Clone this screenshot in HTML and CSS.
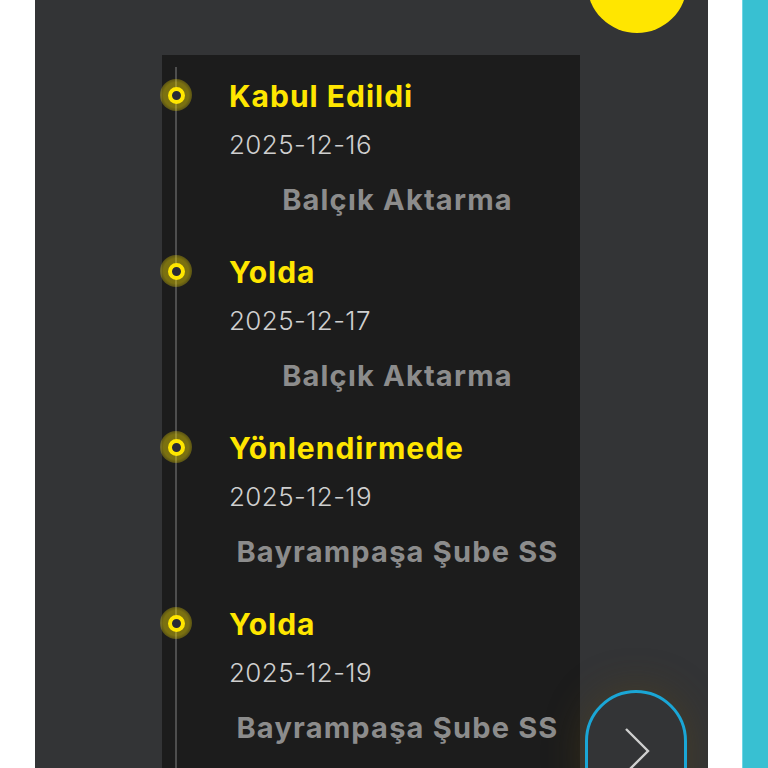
FILE: index.html
```html
<!DOCTYPE html>
<html lang="tr">
<head>
<meta charset="utf-8">
<link rel="stylesheet" href="styles.css">
</head>
<body>
<div class="page">
  <div class="panel">
    <div class="sun"></div>
    <div class="timeline">
      <div class="item">
        <div class="marker"><span class="dot"></span></div>
        <div class="content">
          <div class="title">Kabul Edildi</div>
          <div class="date">2025-12-16</div>
          <div class="place">Balçık Aktarma</div>
        </div>
      </div>
      <div class="item">
        <div class="marker"><span class="dot"></span></div>
        <div class="content">
          <div class="title">Yolda</div>
          <div class="date">2025-12-17</div>
          <div class="place">Balçık Aktarma</div>
        </div>
      </div>
      <div class="item">
        <div class="marker"><span class="dot"></span></div>
        <div class="content">
          <div class="title">Yönlendirmede</div>
          <div class="date">2025-12-19</div>
          <div class="place">Bayrampaşa Şube SS</div>
        </div>
      </div>
      <div class="item">
        <div class="marker"><span class="dot"></span></div>
        <div class="content">
          <div class="title">Yolda</div>
          <div class="date">2025-12-19</div>
          <div class="place">Bayrampaşa Şube SS</div>
        </div>
      </div>
    </div>
    <button class="next" aria-label="İleri">
      <svg width="40" height="60" viewBox="0 0 40 60"><polyline points="10,10 32,32 10,54" fill="none" stroke="#cfcfcf" stroke-width="2.4"/></svg>
    </button>
  </div>
  <div class="strip"></div>
</div>
</body>
</html>
```
FILE: styles.css
```css
html, body {
  margin: 0;
  padding: 0;
  background: #ffffff;
  overflow: hidden;
}
.page {
  display: flex;
  width: 768px;
  height: 768px;
  font-family: Inter, "Open Sans", "Liberation Sans", sans-serif;
}
.panel {
  position: relative;
  margin-left: 35px;
  width: 673px;
  height: 768px;
  background: #333436;
  overflow: hidden;
}
.strip {
  margin-left: 34px;
  width: 26px;
  height: 768px;
  background: #38c0d2;
  border-left: 1px solid #6fd6e4;
  box-sizing: border-box;
}
.sun {
  position: absolute;
  left: 552px;
  top: -67px;
  width: 100px;
  height: 100px;
  border-radius: 50%;
  background: #ffe600;
}
.timeline {
  position: relative;
  margin-left: 127px;
  margin-top: 55px;
  width: 418px;
  height: 713px;
  background: #1c1c1c;
  padding-top: 21px;
  box-sizing: border-box;
}
.timeline::before {
  content: "";
  position: absolute;
  left: 13px;
  top: 12px;
  bottom: 0;
  width: 2px;
  background: #4e4e4e;
}
.item {
  display: grid;
  grid-template-columns: 67px 1fr;
  height: 176px;
}
.marker {
  position: relative;
  width: 32px;
  height: 32px;
  margin-left: -2px;
  margin-top: 3px;
  border-radius: 50%;
  background: radial-gradient(circle, rgba(255, 230, 0, 0.42) 55%, rgba(255, 230, 0, 0.18) 80%, rgba(255, 230, 0, 0) 100%);
  display: flex;
  align-items: center;
  justify-content: center;
}
.dot {
  width: 9px;
  height: 9px;
  border-radius: 50%;
  border: 4.5px solid #ffe600;
  background: #2a2a36;
}
.content {
  display: flex;
  flex-direction: column;
  padding-right: 14px;
}
.title {
  color: #ffe600;
  font-weight: 700;
  font-size: 30px;
  line-height: 40px;
  height: 40px;
  letter-spacing: 1px;
}
.date {
  margin-top: 9px;
  color: #cfcfcf;
  font-weight: 300;
  font-size: 26px;
  line-height: 40px;
  letter-spacing: 0.4px;
}
.place {
  margin-top: 15px;
  color: #8c8c8c;
  font-weight: 700;
  font-size: 29px;
  line-height: 40px;
  text-align: center;
  letter-spacing: 1.2px;
}
.next {
  position: absolute;
  left: 550px;
  top: 690px;
  width: 102px;
  height: 130px;
  border: 3px solid #1aa6d6;
  border-radius: 51px;
  background: #333436;
  box-shadow: 0 0 40px rgba(90, 70, 20, 0.45);
  padding: 0;
  display: flex;
  justify-content: center;
  align-items: flex-start;
  padding-top: 26px;
  box-sizing: border-box;
}
```
